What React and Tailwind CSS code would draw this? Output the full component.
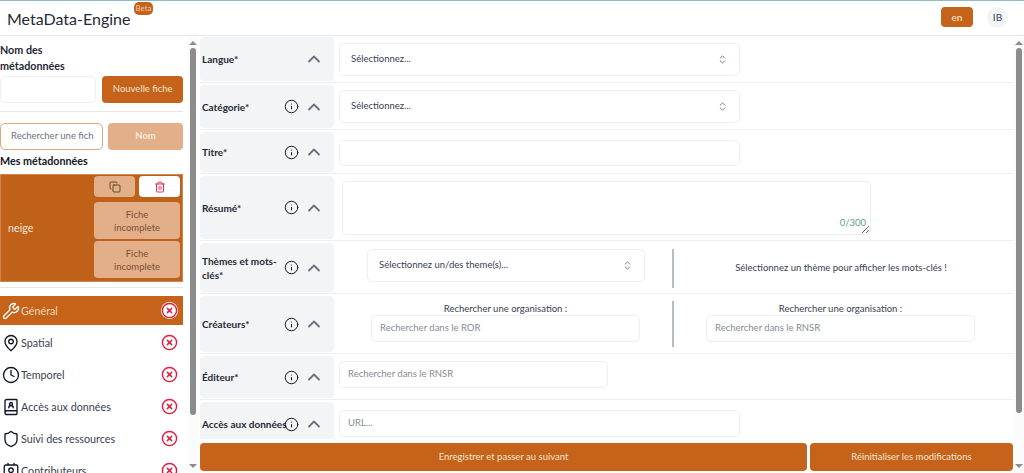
import React from "react";
import { Wrench, MapPin, Clock, BookUser, Shield, Contact, CircleX, Copy, Trash2, Info, ChevronUp, ChevronsUpDown } from "lucide-react";

function Scrollbar({ thumb, className }) {
  return (
    <div className={"flex flex-col items-center bg-[#fbfbfb] shrink-0 w-[10px] " + className}>
      <div className="mt-[5px] w-0 h-0 border-x-[4px] border-x-transparent border-b-[4px] border-b-[#8c8c8c]" />
      <div className={"mt-[3px] w-[6px] rounded-full bg-[#8c8c8c] " + thumb} />
      <div className="flex-1" />
      <div className="mb-[5px] w-0 h-0 border-x-[4px] border-x-transparent border-t-[4px] border-t-[#8c8c8c]" />
    </div>
  );
}

function Row({ label, h, info = true, nowrap = false, children }) {
  return (
    <div className="flex items-stretch pt-[2px] pb-px border-b border-[#eeeff1] shrink-0 box-content">
      <div className={"w-[134px] shrink-0 bg-[#f3f4f6] rounded-[4px] flex items-center pl-[2px] " + h}>
        <div className={"w-[82px] shrink-0 text-[10px] leading-[14px] font-bold text-[#1f2937] " + (nowrap ? "whitespace-nowrap" : "")}>{label}</div>
        <div className="w-[15px] h-[16px] shrink-0 flex items-center justify-center">
          {info && <Info size={17} strokeWidth={1.6} className="text-[#111827]" />}
        </div>
        <ChevronUp size={20} strokeWidth={2.2} className="ml-[5px] text-[#6b7280]" />
      </div>
      <div className="flex-1 min-w-0">{children}</div>
    </div>
  );
}

function Field({ className, children }) {
  return (
    <div className={"border border-[#eceef1] rounded-[5px] bg-white flex items-center text-[9.5px] " + className}>
      {children}
    </div>
  );
}

function Select({ className, text }) {
  return (
    <Field className={"justify-between pl-[11px] pr-[11px] text-[#374151] " + className}>
      <span>{text}</span>
      <ChevronsUpDown size={11} className="text-[#6b7280]" />
    </Field>
  );
}

function NavItem({ icon: I, label, active }) {
  return (
    <div className={"h-[29px] mb-[3px] flex items-center pl-[2px] pr-[5px] text-[10.75px] " + (active ? "bg-[#c46319] text-[#f0d5be]" : "text-[#374151]")}>
      <I size={18} strokeWidth={1.8} className={active ? "text-white" : "text-[#111827]"} />
      <span className="ml-[1px] mt-[2px] flex-1 whitespace-nowrap">{label}</span>
      <span className={"rounded-full " + (active ? "bg-white" : "")}>
        <CircleX size={17} strokeWidth={2} className="text-[#e11d3f]" />
      </span>
    </div>
  );
}

function Incomplete() {
  return (
    <div className="w-[86px] h-[37px] rounded-[4px] bg-[#e2af88] text-[#7a5236] text-[9.5px] leading-[13px] flex items-center justify-center text-center">
      Fiche<br />incomplete
    </div>
  );
}

export default function App() {
  return (
    <div className="h-screen w-full overflow-hidden flex flex-col bg-white border-t border-[#8fbdbf] font-['Lato',sans-serif] text-[#1f2937]">
      <header className="h-[34px] shrink-0 border-b border-[#e8e9eb] flex items-center pl-[7px] box-content">
        <div className="relative text-[16px] text-[#1f2937] leading-none mt-[1px] whitespace-nowrap">
          MetaData-Engine
          <span className="absolute left-[127px] -top-[9px] w-[19px] h-[13px] rounded-[5px] bg-[#c46319] text-[#efc9a8] text-[8px] leading-[13px] text-center">Beta</span>
        </div>
        <div className="ml-auto flex items-center mr-[16px] -mt-[2px]">
          <div className="w-[32px] h-[20px] rounded-[4px] bg-[#c46319] text-[#f4d4b8] text-[10px] font-bold flex items-center justify-center">en</div>
          <div className="ml-[14px] w-[21px] h-[21px] rounded-full bg-[#f3f4f6] text-[#374151] text-[10px] flex items-center justify-center">IB</div>
        </div>
      </header>

      <div className="flex-1 min-h-0 flex">
        <aside className="w-[188px] shrink-0 overflow-hidden pr-[5px]">
          <div className="mt-[6px] text-[10.75px] leading-[16px] font-bold text-[#1f2937]">Nom des<br />métadonnées</div>
          <div className="mt-[2px] flex gap-[6px] h-[27px]">
            <div className="w-[97px] border border-[#eceef1] rounded-[5px]" />
            <div className="w-[81px] rounded-[4px] bg-[#c46319] text-[#f6e3d3] text-[9.5px] flex items-center justify-center">Nouvelle fiche</div>
          </div>
          <div className="mt-[8px] h-px bg-[#e5e7eb]" />
          <div className="mt-[11px] flex gap-[5px] h-[27px]">
            <div className="w-[103px] border border-[#dfa67b] rounded-[5px] pl-[10px] flex items-center overflow-hidden text-[9.5px] text-[#6b7280] whitespace-nowrap">Rechercher une fich</div>
            <div className="w-[75px] rounded-[4px] bg-[#e2af88] text-[#f6e8dc] text-[9.5px] font-bold flex items-center justify-center">Nom</div>
          </div>
          <div className="mt-[3px] text-[10.75px] leading-[16px] font-bold text-[#111827] whitespace-nowrap">Mes métadonnées</div>
          <div className="mt-[5px] h-[108px] bg-[#c0611a] border border-[#d08450] flex items-center pl-[7px] pr-[2px]">
            <span className="flex-1 mt-[1px] text-[10.75px] text-[#f6e8dc]">neige</span>
            <div className="flex flex-col gap-[2px] w-[86px] -mt-[2px]">
              <div className="flex gap-[4px] mb-[3px]">
                <div className="w-[41px] h-[21px] rounded-[4px] bg-[#e2af88] flex items-center justify-center"><Copy size={12} strokeWidth={1.8} className="text-[#5c3a1e]" /></div>
                <div className="w-[41px] h-[21px] rounded-[4px] bg-white flex items-center justify-center"><Trash2 size={12} strokeWidth={1.8} className="text-[#e11d3f]" /></div>
              </div>
              <Incomplete />
              <Incomplete />
            </div>
          </div>
          <div className="mt-[5px] h-px bg-[#e5e7eb]" />
          <div className="mt-[8px]">
            <NavItem icon={Wrench} label="Général" active />
            <NavItem icon={MapPin} label="Spatial" />
            <NavItem icon={Clock} label="Temporel" />
            <NavItem icon={BookUser} label="Accès aux données" />
            <NavItem icon={Shield} label="Suivi des ressources" />
            <NavItem icon={Contact} label="Contributeurs" />
          </div>
        </aside>
        <Scrollbar thumb="h-[367px]" className="" />

        <main className="flex-1 min-w-0 flex flex-col ml-[2px]">
          <div className="h-[404px] shrink-0 overflow-hidden -mt-px">
            <Row label="Langue*" info={false} h="h-[44px]">
              <Select className="ml-[5px] mt-[6px] w-[401px] h-[33px]" text="Sélectionnez..." />
            </Row>
            <Row label="Catégorie*" h="h-[43px]">
              <Select className="ml-[5px] mt-[5px] w-[401px] h-[33px]" text="Sélectionnez..." />
            </Row>
            <Row label="Titre*" h="h-[40px]">
              <Field className="ml-[5px] mt-[8px] w-[401px] h-[26px]" />
            </Row>
            <Row label="Résumé*" h="h-[63px]">
              <div className="relative ml-[8px] mt-[5px] w-[529px] h-[54px]">
                <textarea className="block w-full h-full border border-[#eceef1] rounded-[5px] outline-none" />
                <span className="absolute right-[5px] bottom-[5px] text-[9.5px] text-[#5aa37f]">0/300</span>
              </div>
            </Row>
            <Row label="Thèmes et mots-clés*" h="h-[49px]">
              <div className="flex items-start h-full">
                <Select className="ml-[33px] mt-[6px] w-[278px] h-[33px]" text="Sélectionnez un/des theme(s)..." />
                <div className="ml-[27px] mt-[6px] w-[2px] h-[39px] bg-[#b6bcc6]" />
                <div className="flex-1 mt-[19px] pr-[5px] text-center text-[9.5px] leading-[12px] text-[#374151]">Sélectionnez un thème pour afficher les mots-clés !</div>
              </div>
            </Row>
            <Row label="Créateurs*" h="h-[56px]">
              <div className="flex items-start h-full">
                <div className="ml-[37px] w-[269px] shrink-0 pt-[6px]">
                  <div className="text-center text-[9.5px] leading-[13px] text-[#374151]">Rechercher une organisation :</div>
                  <Field className="h-[27px] pl-[8px] text-[#858b95]">Rechercher dans le ROR</Field>
                </div>
                <div className="ml-[32px] mt-[5px] w-[2px] h-[46px] bg-[#b6bcc6] shrink-0" />
                <div className="ml-[32px] w-[269px] shrink-0 pt-[6px]">
                  <div className="text-center text-[9.5px] leading-[13px] text-[#374151]">Rechercher une organisation :</div>
                  <Field className="h-[27px] pl-[8px] text-[#858b95]">Rechercher dans le RNSR</Field>
                </div>
              </div>
            </Row>
            <Row label="Éditeur*" h="h-[42px]">
              <Field className="ml-[5px] mt-[5px] w-[269px] h-[27px] pl-[8px] text-[#858b95]">Rechercher dans le RNSR</Field>
            </Row>
            <Row label="Accès aux données" nowrap h="h-[44px]">
              <Field className="ml-[5px] mt-[8px] w-[401px] h-[27px] pl-[8px] text-[#858b95]">URL...</Field>
            </Row>
          </div>
          <div className="mt-[4px] h-[28px] flex gap-[3px] text-[9.5px] text-[#f6e3d3]">
            <div className="w-[607px] rounded-[4px] bg-[#c46319] flex items-center justify-center">Enregistrer et passer au suivant</div>
            <div className="w-[203px] rounded-[4px] bg-[#c46319] flex items-center justify-center">Réinitialiser les modifications</div>
          </div>
        </main>
        <Scrollbar thumb="h-[365px]" className="ml-px" />
      </div>
    </div>
  );
}
